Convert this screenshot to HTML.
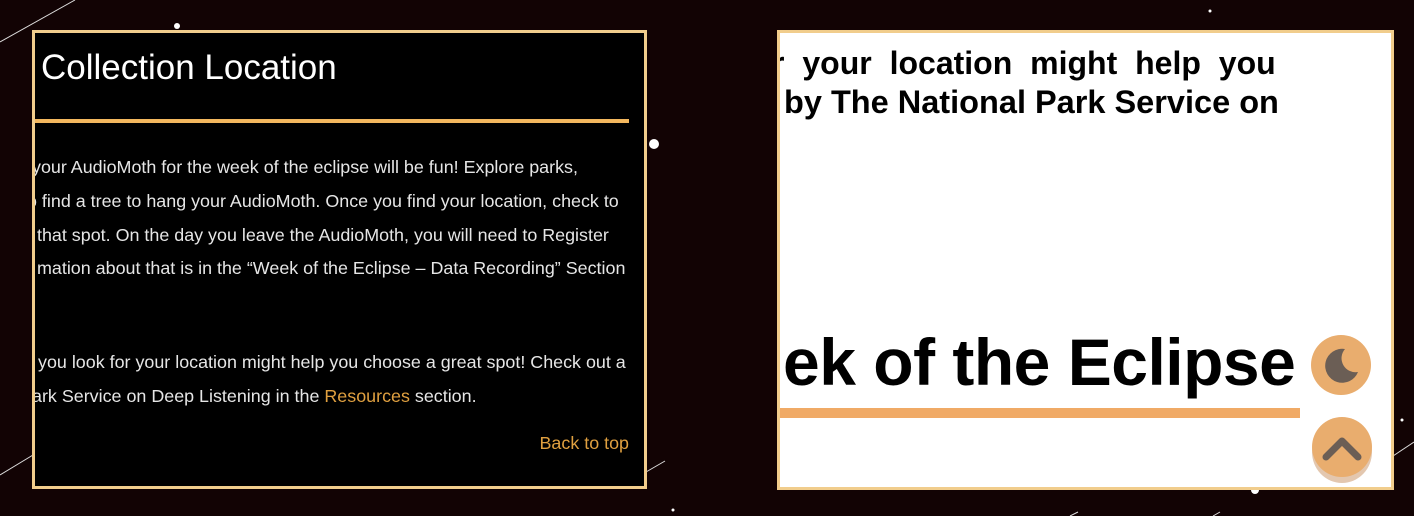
<!DOCTYPE html>
<html><head><style>
html,body{margin:0;padding:0;width:1414px;height:516px;overflow:hidden;background:#120304;font-family:"Liberation Sans",sans-serif;}
.abs{position:absolute;white-space:nowrap;}
#L{position:absolute;left:32px;top:30px;width:609px;height:453px;background:#000;border:3px solid #f1cd8c;overflow:hidden;}
#R{position:absolute;left:777px;top:30px;width:611px;height:454px;background:#fff;border:3px solid #f1cd8c;overflow:hidden;}
.t{color:#e6e6e6;font-size:17.9px;}
.b{color:#000;font-weight:bold;}
</style></head><body>
<svg class="abs" style="left:0;top:0" width="1414" height="516">
<line x1="0" y1="42" x2="75" y2="0" stroke="#ddd" stroke-width="1"/>
<line x1="0" y1="475" x2="33" y2="455" stroke="#ddd" stroke-width="1"/>
<line x1="646" y1="472" x2="665" y2="461" stroke="#ddd" stroke-width="1"/>
<line x1="1393" y1="456" x2="1414" y2="442" stroke="#ddd" stroke-width="1"/>
<line x1="1213" y1="516" x2="1220" y2="512" stroke="#ddd" stroke-width="1"/>
<line x1="1070" y1="516" x2="1078" y2="512" stroke="#ddd" stroke-width="1"/>
<circle cx="177" cy="26" r="3" fill="#fff"/>
<circle cx="654" cy="144" r="5" fill="#fff"/>
<circle cx="1210" cy="11" r="1.5" fill="#fff"/>
<circle cx="1255" cy="490" r="4" fill="#fff"/>
<circle cx="1402" cy="420" r="1.5" fill="#fff"/>
<circle cx="673" cy="510" r="1.5" fill="#fff"/>
</svg>
<div id="L">
<div class="abs" style="left:6px;top:15px;color:#fff;font-size:35px;">Collection Location</div>
<div class="abs" style="left:0;top:86px;width:594px;height:4px;background:#f3b75e;"></div>
<div class="abs t" style="left:-3px;top:124px;">your AudioMoth for the week of the eclipse will be fun! Explore parks,</div>
<div class="abs t" style="left:-8px;top:158px;">o find a tree to hang your AudioMoth. Once you find your location, check to</div>
<div class="abs t" style="left:2px;top:192px;">that spot. On the day you leave the AudioMoth, you will need to Register</div>
<div class="abs t" style="left:2px;top:225px;">mation about that is in the “Week of the Eclipse – Data Recording” Section</div>
<div class="abs t" style="left:3px;top:319px;">you look for your location might help you choose a great spot! Check out a</div>
<div class="abs t" style="left:-3px;top:353px;">ark Service on Deep Listening in the <span style="color:#e0a040">Resources</span> section.</div>
<div class="abs t" style="right:15px;top:400px;color:#e0a040;">Back to top</div>
</div>
<div id="R">
<div class="abs b" style="left:-8px;top:12px;font-size:32px;word-spacing:9px;">r your location might help you</div>
<div class="abs b" style="left:4px;top:51px;font-size:32.5px;">by The National Park Service on</div>
<div class="abs b" style="left:3px;top:291px;font-size:66px;letter-spacing:-0.5px;">ek of the Eclipse</div>
<div class="abs" style="left:0;top:375px;width:520px;height:10px;background:#f0aa66;"></div>
</div>
<svg class="abs" style="left:1305px;top:330px" width="75" height="160">
<circle cx="36" cy="35" r="30" fill="#e9ad6e"/>
<path d="M40 19 A17 17 0 1 0 53 42 A14 14 0 0 1 40 19Z" fill="#6b5e55"/>
<ellipse cx="37" cy="122" rx="30" ry="31" fill="#c79060" opacity="0.5"/>
<circle cx="37" cy="117" r="30" fill="#e9ad6e"/>
<path d="M21 127 L37 111 L53 127" stroke="#6b5e55" stroke-width="7" fill="none" stroke-linecap="round" stroke-linejoin="round"/>
</svg>
</body></html>
